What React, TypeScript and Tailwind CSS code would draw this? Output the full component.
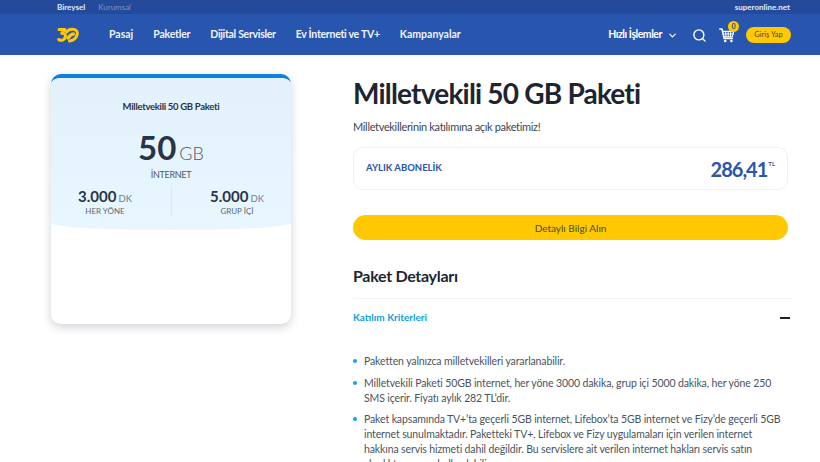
import { ChevronDown, Search } from 'lucide-react';

const navItems = [
  { label: 'Pasaj', cls: '' },
  { label: 'Paketler', cls: 'tracking-[-0.2px]' },
  { label: 'Dijital Servisler', cls: 'tracking-[-0.3px]' },
  { label: 'Ev İnterneti ve TV+', cls: 'tracking-[-0.27px]' },
  { label: 'Kampanyalar', cls: '' },
];

function Logo() {
  return (
    <svg width="22" height="16" viewBox="0 0 22 16" fill="none" stroke="#ffc800" strokeWidth="3" strokeLinecap="round" strokeLinejoin="round">
      <path d="M2 2.5H8L4.8 6.3C7.8 6 9 8 8.2 10.5C7.4 13.5 3.5 14 1.7 12.5" />
      <path d="M9.5 5C11 3 13.5 2 16 2.2C19.5 2.4 21 5 20 8C19 11.5 16.5 13.5 12.5 14" />
      <path d="M11 11C13 8.5 14.5 7 16.5 7" strokeWidth="3.4" />
    </svg>
  );
}

function Cart() {
  return (
    <svg width="16" height="15" viewBox="0 0 16 15" fill="none" stroke="white" strokeLinecap="round" strokeLinejoin="round">
      <path d="M0.8 1H3L5.2 10.6H13.4" strokeWidth="1.5" />
      <path d="M3.8 3.4H14.6L13.2 8.8H5" strokeWidth="1.3" />
      <path d="M6.6 3.6L7 8.8M9.2 3.6V8.8M11.8 3.6L11.3 8.8M4.2 6H14" strokeWidth="1" />
      <circle cx="6.2" cy="13" r="1.3" fill="white" stroke="none" />
      <circle cx="12.4" cy="13" r="1.3" fill="white" stroke="none" />
    </svg>
  );
}

function Stat({ value, label }: { value: string; label: string }) {
  return (
    <div className="w-[53px] flex flex-col items-center">
      <div className="leading-[18px] text-[#2a3444] whitespace-nowrap">
        <span className="text-[15px] font-bold">{value}</span>
        <span className="text-[9.5px] text-[#737d8a] ml-[2px]">DK</span>
      </div>
      <div className="text-[8px] leading-[10px] -mt-[2px] text-[#5d6875] whitespace-nowrap">{label}</div>
    </div>
  );
}

function Bullet({ children }: { children: string }) {
  return (
    <li className="flex">
      <span className="w-[4px] h-[4px] mt-[5px] mr-[7px] rounded-full bg-[#12a5e6] shrink-0" />
      <span>{children}</span>
    </li>
  );
}

export default function App() {
  return (
    <div className="h-[462px] w-[820px] overflow-hidden bg-white font-['Lato',sans-serif] text-[#2a3444]">
      <div className="h-[14px] bg-[#234a9b] flex items-center justify-between pl-[57px] pr-[30px] text-[8px]">
        <div className="flex gap-[13px]">
          <span className="font-bold text-[#e6ecf7]">Bireysel</span>
          <span className="text-[#7c95c8]">Kurumsal</span>
        </div>
        <span className="font-bold text-[#e6ecf7]">superonline.net</span>
      </div>
      <header className="h-[41px] bg-[#2855ad] flex items-center pl-[57px] pr-[29px] text-white">
        <Logo />
        <nav className="flex gap-[20px] ml-[30px] text-[10.5px] font-bold text-[#f0f4fb] pt-[1px]">
          {navItems.map((item) => (
            <span key={item.label} className={item.cls}>{item.label}</span>
          ))}
        </nav>
        <div className="ml-auto flex items-center pt-[1px]">
          <span className="text-[10.5px] font-bold tracking-[-0.45px]">Hızlı İşlemler</span>
          <ChevronDown size={11} strokeWidth={2.4} className="ml-[5px]" />
          <Search size={15} strokeWidth={2.2} className="ml-[14px]" />
          <div className="relative ml-[12px]">
            <Cart />
            <span className="absolute -top-[7px] -right-[4px] w-[11px] h-[11px] rounded-full bg-[#ffc800] text-[#234a9b] text-[7px] font-bold flex items-center justify-center">0</span>
          </div>
          <button className="ml-[11px] w-[45px] h-[16px] rounded-full bg-[#ffc800] text-[#4a4a3a] text-[7.5px]">Giriş Yap</button>
        </div>
      </header>

      <main className="flex pl-[51px]">
        <aside className="w-[240px] shrink-0 pt-[19px]">
          <div className="h-[250px] rounded-[10px] border-t-[4px] border-[#0f7fe0] shadow-[0_3px_10px_rgba(40,50,70,0.22)] overflow-hidden bg-white">
            <div className="h-[152px] bg-gradient-to-b from-[#e3f1fb] to-[#e8f6ff] rounded-b-[50%_7px] flex flex-col items-center pt-[23px]">
              <div className="text-[9.5px] font-bold leading-[12px] tracking-[-0.3px]">Milletvekili 50 GB Paketi</div>
              <div className="mt-[15px] leading-[38px]">
                <span className="text-[33px] font-bold">50</span>
                <span className="text-[18px] font-light text-[#4f5a67] ml-[3px]">GB</span>
              </div>
              <div className="text-[9px] leading-[12px] text-[#4f5a67] -mt-[4px] tracking-[-0.3px]">İNTERNET</div>
              <div className="flex justify-center gap-[39px] w-full mt-[6px]">
                <Stat value="3.000" label="HER YÖNE" />
                <div className="w-px bg-[#dde9f2]" />
                <Stat value="5.000" label="GRUP İÇİ" />
              </div>
            </div>
          </div>
        </aside>

        <section className="ml-[62px] w-[435px] pt-[20px]">
          <h1 className="text-[28px] leading-[36px] font-bold text-[#1d2531] tracking-[-0.8px]">Milletvekili 50 GB Paketi</h1>
          <p className="text-[11px] leading-[14px] mt-[9px] text-[#3b4552] tracking-[-0.33px]">Milletvekillerinin katılımına açık paketimiz!</p>
          <div className="mt-[13px] h-[43px] rounded-[10px] border border-[#f0f1f3] flex items-center justify-between pl-[12px] pr-[12px]">
            <span className="text-[9.5px] font-bold text-[#2855ad]">AYLIK ABONELİK</span>
            <div className="flex items-start text-[#2855ad]">
              <span className="text-[20px] font-bold leading-[24px] tracking-[-1px]">286,41</span>
              <span className="text-[6px] font-bold leading-[14px] ml-[1px]">TL</span>
            </div>
          </div>
          <button className="mt-[25px] w-full h-[25px] rounded-full bg-[#ffc800] text-[10px] text-[#4a4a3a] pt-[1px]">Detaylı Bilgi Alın</button>
          <h2 className="mt-[26px] text-[16px] leading-[20px] font-bold text-[#1d2531] tracking-[-0.3px]">Paket Detayları</h2>
          <div className="mt-[12px] border-t border-[#f2f3f5] h-[38px] flex items-center justify-between pr-[2px] w-[439px]">
            <span className="text-[10px] font-bold text-[#0d9fe0]">Katılım Kriterleri</span>
            <span className="w-[10px] h-[2px] bg-[#222]" />
          </div>
          <ul className="mt-[18px] w-[428px] text-[10.5px] leading-[15px] text-[#4a5460] tracking-[-0.12px] flex flex-col gap-[6.5px]">
            <Bullet>Paketten yalnızca milletvekilleri yararlanabilir.</Bullet>
            <Bullet>Milletvekili Paketi 50GB internet, her yöne 3000 dakika, grup içi 5000 dakika, her yöne 250 SMS içerir. Fiyatı aylık 282 TL’dir.</Bullet>
            <Bullet>Paket kapsamında TV+’ta geçerli 5GB internet, Lifebox’ta 5GB internet ve Fizy’de geçerli 5GB internet sunulmaktadır. Paketteki TV+, Lifebox ve Fizy uygulamaları için verilen internet hakkına servis hizmeti dahil değildir. Bu servislere ait verilen internet hakları servis satın alındıktan sonra kullanılabilir.</Bullet>
          </ul>
        </section>
      </main>
    </div>
  );
}
